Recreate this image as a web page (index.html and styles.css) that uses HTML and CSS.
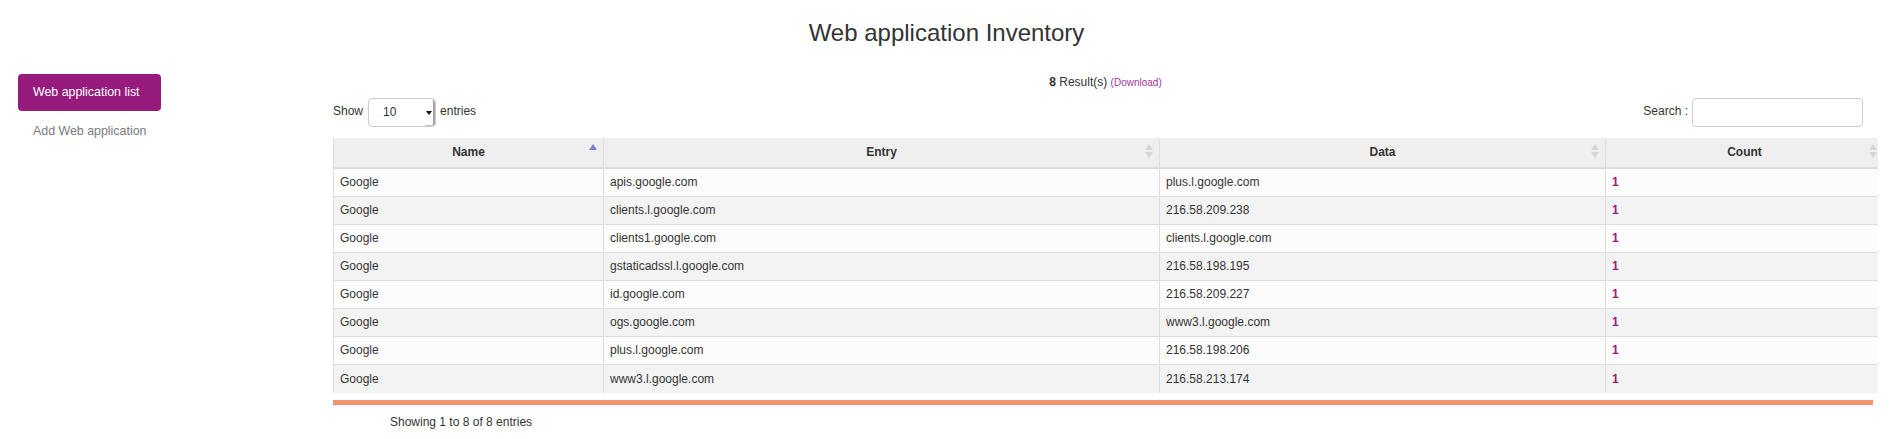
FILE: index.html
```html
<!DOCTYPE html>
<html lang="en">
<head>
<meta charset="utf-8">
<title>Web application Inventory</title>
<link rel="stylesheet" href="styles.css">
</head>
<body>
<h1 class="title">Web application Inventory</h1>
<div class="layout">
  <nav class="sidebar">
    <a class="nav-item active">Web application list</a>
    <a class="nav-item">Add Web application</a>
  </nav>
  <main class="main">
    <div class="results"><b>8</b> Result(s) <a class="download">(Download)</a></div>
    <div class="controls">
      <div class="length"><span class="label">Show</span><span class="select"><span class="select-value">10</span><span class="select-arrow"></span></span><span class="label">entries</span></div>
      <div class="search"><span class="label">Search :</span><span class="search-input"></span></div>
    </div>
    <div class="table-wrap">
      <table class="data">
        <colgroup>
          <col class="c-name"><col class="c-entry"><col class="c-data"><col class="c-count">
        </colgroup>
        <thead>
          <tr>
            <th class="sort-asc">Name</th>
            <th class="sort-both">Entry</th>
            <th class="sort-both">Data</th>
            <th class="sort-both">Count</th>
          </tr>
        </thead>
        <tbody>
          <tr><td>Google</td><td>apis.google.com</td><td>plus.l.google.com</td><td class="count">1</td></tr>
          <tr><td>Google</td><td>clients.l.google.com</td><td>216.58.209.238</td><td class="count">1</td></tr>
          <tr><td>Google</td><td>clients1.google.com</td><td>clients.l.google.com</td><td class="count">1</td></tr>
          <tr><td>Google</td><td>gstaticadssl.l.google.com</td><td>216.58.198.195</td><td class="count">1</td></tr>
          <tr><td>Google</td><td>id.google.com</td><td>216.58.209.227</td><td class="count">1</td></tr>
          <tr><td>Google</td><td>ogs.google.com</td><td>www3.l.google.com</td><td class="count">1</td></tr>
          <tr><td>Google</td><td>plus.l.google.com</td><td>216.58.198.206</td><td class="count">1</td></tr>
          <tr><td>Google</td><td>www3.l.google.com</td><td>216.58.213.174</td><td class="count">1</td></tr>
        </tbody>
      </table>
    </div>
    <div class="bar"></div>
    <div class="info">Showing 1 to 8 of 8 entries</div>
  </main>
</div>
</body>
</html>
```
FILE: styles.css
```css
body {
  margin: 0;
  font-family: "Liberation Sans", Arial, sans-serif;
  font-size: 12px;
  color: #333;
  background: #fff;
}

.title {
  margin: 0;
  padding-top: 20px;
  font-size: 24px;
  line-height: 26px;
  font-weight: normal;
  text-align: center;
  color: #333;
}

.layout {
  display: flex;
  align-items: flex-start;
  margin-top: 28px;
}

.sidebar {
  margin-left: 18px;
  width: 143px;
  display: flex;
  flex-direction: column;
  gap: 2px;
}

.nav-item {
  display: block;
  padding: 10px 0 10px 15px;
  line-height: 17px;
  font-size: 12.4px;
  white-space: nowrap;
  border-radius: 4px;
  color: #7a7a80;
  text-decoration: none;
}

.nav-item.active {
  background: #961b7c;
  color: #fff;
}

.main {
  margin-left: 172px;
  width: 1530px;
}

.results {
  width: 1545px;
  text-align: center;
  line-height: 16px;
  font-size: 12px;
}

.download {
  color: #a1339b;
  font-size: 10px;
}

.controls {
  display: flex;
  justify-content: space-between;
  align-items: center;
  height: 29px;
  margin-top: 7px;
}

.length,
.search {
  display: flex;
  align-items: center;
}

.label {
  padding-bottom: 3px;
}

.select {
  display: flex;
  align-items: stretch;
  width: 68px;
  height: 29px;
  box-sizing: border-box;
  margin: 0 4px 0 5px;
  border: 1px solid #ccc;
  border-radius: 4px;
  background: #fff;
}

.select-value {
  flex: 1;
  padding-left: 14px;
  line-height: 27px;
}

.select-arrow {
  width: 8px;
  display: flex;
  align-items: center;
  justify-content: center;
  border-right: 2px solid #a5a5a5;
  border-bottom: 1px solid #c4c4c4;
  border-radius: 0 3px 3px 0;
  margin-top: 1px;
}

.select-arrow::after {
  content: "";
  border-left: 3px solid transparent;
  border-right: 3px solid transparent;
  border-top: 4px solid #111;
}

.search-input {
  width: 171px;
  height: 29px;
  box-sizing: border-box;
  margin-left: 4px;
  border: 1px solid #ccc;
  border-radius: 4px;
  background: #fff;
}

.table-wrap {
  margin-top: 11px;
  width: 1545px;
  overflow: hidden;
}

.data {
  border-collapse: separate;
  border-spacing: 0;
  table-layout: fixed;
  width: 1550px;
}

.c-name { width: 270px; }
.c-entry { width: 556px; }
.c-data { width: 446px; }
.c-count { width: 278px; }

.data th {
  position: relative;
  padding: 0;
  line-height: 29px;
  background: #efefef;
  border-left: 1px solid #dedede;
  border-bottom: 2px solid #dcdcdc;
  font-weight: bold;
  text-align: center;
  color: #333;
}

.data th::before,
.data th::after {
  content: "";
  position: absolute;
  right: 6px;
  width: 0;
  height: 0;
  border-left: 4px solid transparent;
  border-right: 4px solid transparent;
}

.data th.sort-both::before {
  top: 6px;
  border-bottom: 6px solid #d6d6d6;
}

.data th.sort-both::after {
  top: 14px;
  border-top: 6px solid #d6d6d6;
}

.data th.sort-asc::before {
  top: 6px;
  border-bottom: 6px solid #7d80d6;
}

.data th.sort-asc::after {
  display: none;
}

.data td {
  padding: 0 6px;
  line-height: 27px;
  border-left: 1px solid #dedede;
  border-bottom: 1px solid #dedede;
  white-space: nowrap;
  overflow: hidden;
  color: #333;
}

.data tbody tr:last-child td {
  border-bottom: none;
  line-height: 28px;
}

.data tbody tr:nth-child(odd) td {
  background: #fcfcfc;
}

.data tbody tr:nth-child(even) td {
  background: #f3f3f3;
}

.data td.count {
  color: #961b7c;
  font-weight: bold;
}

.bar {
  margin-top: 7px;
  width: 1540px;
  height: 5px;
  background: #f3936e;
}

.info {
  margin-top: 9px;
  padding-left: 57px;
  line-height: 16px;
}
```
